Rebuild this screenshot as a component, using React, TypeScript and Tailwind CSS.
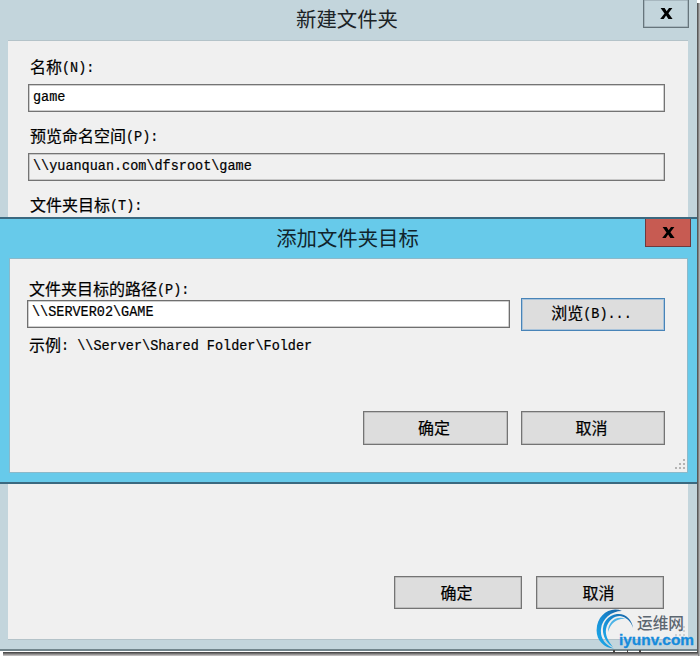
import type { ReactNode } from "react";
import clsx from "clsx";

interface DialogButtonProps {
  children: ReactNode;
  className?: string;
  focused?: boolean;
}

function DialogButton({ children, className, focused }: DialogButtonProps) {
  return (
    <button
      className={clsx(
        "flex shrink-0 items-center justify-center border bg-[#dddddd] pr-[3px] pb-[2px] leading-none [-webkit-text-stroke:0.2px_#000]",
        focused
          ? "border-[#4884b8] shadow-[inset_0_0_0_1px_#a9c3da]"
          : "border-[#747474] shadow-[inset_0_0_0_0.5px_#a0a0a0]",
        className
      )}
    >
      <span>{children}</span>
    </button>
  );
}

/* Tall, narrow fixed-width latin text, 8px per character */
function Mono({ children }: { children: ReactNode }) {
  return (
    <span className="inline-block -translate-y-px scale-y-[1.14] font-['Liberation_Mono',monospace] text-[13.5px] whitespace-pre [-webkit-text-stroke:0.2px_#000]">
      {children}
    </span>
  );
}

function CloseIcon() {
  return (
    <svg width="13" height="11" viewBox="0 0 13 11" fill="#000">
      <path d="M.6 0h4l2.1 3.2L9 0h3.4L8.4 5.2 12.6 11H8.4L6.1 7.5 3.7 11H.2l4.3-5.6z" />
    </svg>
  );
}

function SizeGrip() {
  return (
    <svg width="11" height="11" viewBox="0 0 11 11" fill="#b4b4b4">
      <path d="M8 0h2v2H8zM4 4h2v2H4zM8 4h2v2H8zM0 8h2v2H0zM4 8h2v2H4zM8 8h2v2H8z" />
    </svg>
  );
}

function Watermark() {
  return (
    <div className="absolute top-[608px] left-[596px] h-[46px] w-[100px]">
      <svg className="absolute top-0 left-0" width="40" height="42" viewBox="0 0 40 42">
        <defs>
          <linearGradient id="swirl" x1="1" y1="0" x2="0" y2="1">
            <stop offset="0" stopColor="#1b5f9e" />
            <stop offset="0.45" stopColor="#1687cf" />
            <stop offset="1" stopColor="#1fb0ee" />
          </linearGradient>
        </defs>
        <path d="M26 3C14-2 1 7 .6 22 .4 32 8 40 18 40.500 9 37 4 30 5 21 6 11 15 3 26 3z" fill="url(#swirl)" />
        <path d="M37 20C36 11 29 5 21 6 12 7 6 15 7 24c1 7 5 12 10 15C12 33 9 27 10 21 12 12 18 8 24 8c6 1 11 5 13 12z" fill="url(#swirl)" />
        <path d="M30 11C20 7 12 14 12 24 15 15 21 10 30 11z" fill="#4db3e6" />
      </svg>
      <div className="absolute top-[6px] left-[23px] flex flex-col whitespace-nowrap">
        <span className="h-[18px] pl-[18px] text-[15.7px] leading-[17px] font-medium text-[#5c6670]">运维网</span>
        <span className="h-[16px] font-['Liberation_Sans',sans-serif] text-[15.4px] leading-[16px] font-bold text-[#168bdc] [-webkit-text-stroke:0.3px_#168bdc]">
          iyunv.com
        </span>
      </div>
    </div>
  );
}

/* Modal asking for the path of the folder target */
function AddTargetDialog() {
  return (
    <div className="absolute top-[217px] left-0 flex h-[267px] w-[697px] flex-col border-y-2 border-[#3b6980] bg-[#67caea] pr-[9px] pl-[9px]">
      <div className="relative flex h-[39px] shrink-0 items-center justify-center pr-[2px] pb-[3px]">
        <h2 className="text-[20.4px] leading-none text-[#10242c]">添加文件夹目标</h2>
        <button className="absolute top-0 -right-[3px] flex h-[28px] w-[46px] items-center justify-center border border-t-0 border-[#70393e] bg-[#c75b52]">
          <CloseIcon />
        </button>
      </div>
      <div className="flex h-[215px] flex-col border border-[#8bb9ca] bg-[#f0f0f0] pr-[22px] pl-[17px]">
        <label className="mt-[18px] h-[21px] pl-[2px] text-[16px] leading-[22px] [-webkit-text-stroke:0.2px_#000]">
          文件夹目标的路径<Mono>(P):</Mono>
        </label>
        <div className="flex justify-between">
          <div className="mt-[2px] flex h-[28px] w-[483px] border border-[#6f6f6f] bg-white px-[4px] leading-[25px] shadow-[inset_0_0_0_0.5px_#a0a0a0]">
            <Mono>\\SERVER02\GAME</Mono>
          </div>
          <DialogButton className="h-[33px] w-[144px]" focused>
            浏览<Mono>(B)...</Mono>
          </DialogButton>
        </div>
        <p className="mt-[2px] h-[22px] pl-[2px] text-[16px] leading-[22px] [-webkit-text-stroke:0.2px_#000]">
          示例<Mono>: \\Server\Shared Folder\Folder</Mono>
        </p>
        <div className="mt-[56px] flex justify-end gap-[13px]">
          <DialogButton className="h-[34px] w-[145px]">确定</DialogButton>
          <DialogButton className="h-[34px] w-[144px]">取消</DialogButton>
        </div>
      </div>
      <div className="absolute top-[240px] left-[675px]">
        <SizeGrip />
      </div>
    </div>
  );
}

export default function App() {
  return (
    <div className="relative h-[656px] w-[700px] overflow-hidden bg-white font-['Noto_Sans_CJK_SC',sans-serif] text-[16px] text-black">
      {/* Drop shadow along the right and bottom edges */}
      <div className="absolute top-[3px] right-0 h-[653px] w-[3px] bg-linear-to-r from-[#454545] to-[#c4c4c4]" />
      <div className="absolute bottom-0 left-[3px] h-[4px] w-[695px] bg-linear-to-b from-[#3c3c3c] to-[#d2cfcf]" />
      <div className="relative flex h-[651px] w-[697px] flex-col border-b-2 border-[#72858c] bg-[#c3d5dc] pr-[9px] pl-[8px]">
        <div className="relative flex h-[40px] shrink-0 items-center justify-center pr-[2px] pb-[3px]">
          <h1 className="text-[20.4px] leading-none text-[#1b2326]">新建文件夹</h1>
          <button className="absolute top-0 -right-px flex h-[28px] w-[46px] items-center justify-center border border-t-0 border-[#66757c] shadow-[inset_0_0_0_0.5px_#8b9aa1]">
            <CloseIcon />
          </button>
        </div>
        <div className="flex h-[600px] flex-col border-y border-[#b4c3c9] bg-[#f0f0f0] pr-[24px] pl-[20px]">
          <label className="mt-[15px] h-[28px] pl-[2px] leading-[21px] [-webkit-text-stroke:0.2px_#000]">
            名称<Mono>(N):</Mono>
          </label>
          <div className="h-[28px] w-[637px] border border-[#747474] bg-white px-[4px] leading-[20px] shadow-[inset_0_0_0_0.5px_#a0a0a0]">
            <Mono>game</Mono>
          </div>
          <label className="mt-[13px] h-[28px] pl-[2px] leading-[21px] [-webkit-text-stroke:0.2px_#000]">
            预览命名空间<Mono>(P):</Mono>
          </label>
          <div className="h-[28px] w-[637px] border border-[#747474] px-[4px] leading-[20px] shadow-[inset_0_0_0_0.5px_#a0a0a0]">
            <Mono>\\yuanquan.com\dfsroot\game</Mono>
          </div>
          <label className="mt-[13px] h-[28px] pl-[2px] leading-[21px] [-webkit-text-stroke:0.2px_#000]">
            文件夹目标<Mono>(T):</Mono>
          </label>
          <div className="mt-auto mb-[30px] flex justify-end gap-[14px]">
            <DialogButton className="h-[33px] w-[128px]">确定</DialogButton>
            <DialogButton className="h-[33px] w-[128px]">取消</DialogButton>
          </div>
        </div>
        <div className="absolute top-[626px] left-[675px] opacity-50">
          <SizeGrip />
        </div>
      </div>
      <AddTargetDialog />
      {/* Cut-off marks under the watermark */}
      <svg className="absolute top-[650px] left-[613px]" width="30" height="3" viewBox="0 0 30 3" fill="#444">
        <path d="M0 0h2v3H0zM14 0h1v3h-1zM26 0h2v3h-2z" />
      </svg>
      <Watermark />
    </div>
  );
}
